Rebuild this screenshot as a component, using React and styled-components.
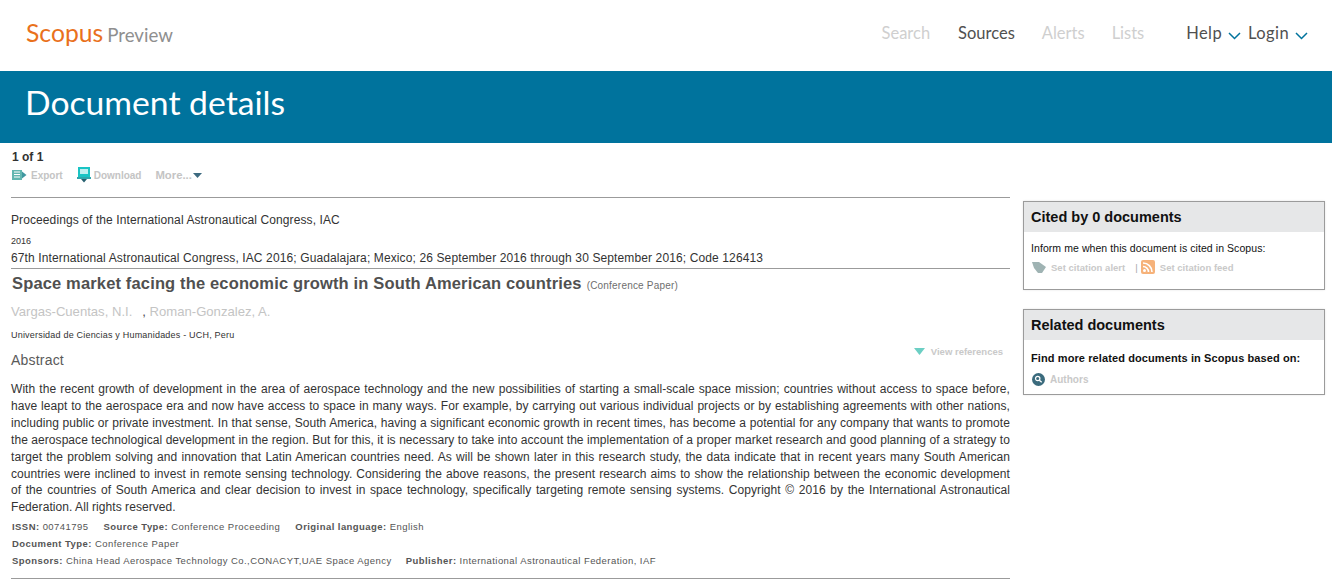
import React from "react";
import styled, { createGlobalStyle } from "styled-components";

const GlobalStyle = createGlobalStyle`
  html, body {
    margin: 0;
    padding: 0;
    background: #ffffff;
    font-family: "Liberation Sans", Arial, sans-serif;
    color: #323232;
  }
`;

const Page = styled.div`
  width: 1332px;
  height: 588px;
  overflow: hidden;
`;

const Header = styled.header`
  height: 71px;
  display: flex;
  align-items: center;
  justify-content: space-between;
  padding: 0 24px 5px 26px;
  box-sizing: border-box;
  font-family: Lato, sans-serif;
`;

const Logo = styled.div`
  display: flex;
  align-items: baseline;
  gap: 4px;
  margin-top: -2px;
`;

const LogoMain = styled.span`
  font-size: 24.7px;
  color: #e9711c;
`;

const LogoSub = styled.span`
  font-size: 18.7px;
  color: #8f8f8f;
`;

const Nav = styled.nav`
  display: flex;
  align-items: center;
`;

const NavItem = styled.a`
  font-size: 16.5px;
  letter-spacing: ${(p) => (p.$menu ? "0.4px" : "0")};
  color: ${(p) => (p.$muted ? "#cfcfcf" : "#505050")};
  margin-left: ${(p) => p.$gap}px;
  display: flex;
  align-items: center;
  gap: 6px;

  svg {
    margin-top: 5px;
  }
`;

const Banner = styled.div`
  height: 72px;
  box-sizing: border-box;
  background: #00739d;
  color: #ffffff;
  display: flex;
  align-items: center;
  padding: 0 0 10px 25px;
  font-family: Lato, sans-serif;
  font-size: 33.7px;
`;

const Content = styled.div`
  display: flex;
  align-items: flex-start;
  padding-left: 11px;
  gap: 13px;
`;

const Main = styled.main`
  width: 999px;
  flex: none;
`;

const Side = styled.aside`
  width: 302px;
  flex: none;
  padding-top: 58px;
  display: flex;
  flex-direction: column;
  gap: 19px;
`;

const Counter = styled.div`
  font-size: 12px;
  font-weight: bold;
  line-height: 14px;
  padding: 7px 0 0 1px;
`;

const Tools = styled.div`
  display: flex;
  align-items: center;
  height: 20px;
  padding: 1px 0 0 1px;
`;

const ToolLink = styled.a`
  display: flex;
  align-items: center;
  gap: ${(p) => p.$iconGap}px;
  font-size: ${(p) => (p.$more ? 11.3 : 10)}px;
  font-weight: bold;
  color: #c4c4c4;
  margin-right: ${(p) => p.$gap || 0}px;
`;

const Rule = styled.hr`
  margin: 0;
  border: 0;
  height: 1px;
  background: #9b9b9b;
`;

const TopRule = styled(Rule)`
  margin-top: 12px;
`;

const SourceName = styled.div`
  font-size: 12px;
  line-height: 14px;
  letter-spacing: 0.1px;
  margin-top: 15px;
`;

const Year = styled.div`
  font-size: 9px;
  line-height: 11px;
  margin-top: 9px;
`;

const Conference = styled.div`
  font-size: 12px;
  line-height: 14px;
  letter-spacing: 0.12px;
  margin-top: 4px;
  height: 17px;
`;

const TitleRow = styled.div`
  display: flex;
  align-items: baseline;
  gap: 5px;
  padding: 4px 0 0 1px;
  height: 25px;
  box-sizing: border-box;
`;

const Title = styled.h1`
  margin: 0;
  font-size: 16.5px;
  line-height: 20px;
  letter-spacing: 0.15px;
  font-weight: bold;
  color: #505050;
`;

const TitleKind = styled.span`
  font-size: 10px;
  letter-spacing: 0.2px;
  color: #6e6e6e;
`;

const Authors = styled.div`
  font-size: 13.1px;
  line-height: 16px;
  margin-top: 10px;
  color: #c4c4c4;
`;

const Comma = styled.span`
  color: #505050;
  margin-left: 10px;
`;

const Affiliation = styled.div`
  font-size: 9px;
  line-height: 11px;
  letter-spacing: 0.2px;
  margin-top: 10px;
`;

const AbstractHead = styled.div`
  display: flex;
  justify-content: space-between;
  height: 22px;
  margin-top: 5px;
`;

const AbstractTitle = styled.h2`
  margin: 6px 0 0;
  font-size: 14px;
  line-height: 16px;
  letter-spacing: 0.2px;
  font-weight: normal;
  color: #5a5a5a;
`;

const ViewRefs = styled.a`
  display: flex;
  align-items: center;
  align-self: flex-start;
  gap: 6px;
  font-size: 9.5px;
  font-weight: bold;
  color: #c9c9c9;
  padding-right: 7px;
`;

const AbstractText = styled.p`
  margin: 13px 0 2px;
  font-size: 12px;
  line-height: 16.9px;
  letter-spacing: 0.06px;
  text-align: justify;
  color: #333333;
`;

const MetaRow = styled.div`
  display: flex;
  font-size: 9.5px;
  line-height: 17px;
  letter-spacing: 0.44px;
  color: #555555;
  padding-left: 1px;
  height: 17px;
`;

const MetaItem = styled.span`
  margin-right: ${(p) => p.$gap || 0}px;
`;

const BottomRule = styled(Rule)`
  margin-top: 9px;
`;

const Panel = styled.section`
  border: 1px solid #9b9b9b;
  box-shadow: 0 0 2px #e4e4e4;
  height: ${(p) => p.$height}px;
  box-sizing: border-box;
`;

const PanelHead = styled.h3`
  margin: 0;
  height: ${(p) => p.$height}px;
  background: #e6e7e8;
  padding-left: 7px;
  font-size: 14.5px;
  line-height: ${(p) => p.$height}px;
  font-weight: bold;
  color: #111111;
`;

const PanelLine = styled.div`
  font-size: ${(p) => (p.$bold ? 11 : 10.5)}px;
  font-weight: ${(p) => (p.$bold ? "bold" : "normal")};
  letter-spacing: ${(p) => (p.$bold ? "0.1px" : "0.07px")};
  line-height: 14px;
  color: #111111;
  padding: ${(p) => p.$top}px 0 0 7px;
`;

const PanelLinks = styled.div`
  display: flex;
  align-items: center;
  font-size: ${(p) => p.$size || 9.5}px;
  font-weight: bold;
  letter-spacing: 0.02px;
  color: #c9c9c9;
  padding: ${(p) => p.$top}px 0 0 8px;
  height: 14px;
`;

const PanelLink = styled.span`
  margin-left: 5px;
`;

const Divider = styled.span`
  font-weight: normal;
  color: #a8a8a8;
  margin: 0 3px 0 10px;
`;

const ExportIcon = () => (
  <svg width="15" height="12" viewBox="0 0 15 12">
    <rect x="0" y="1" width="10" height="10" fill="#62b6b0" />
    <path d="M2 3h6M2 5.5h6M2 8h6" stroke="#ffffff" strokeWidth="1" />
    <path d="M10 2.5l4.5 3.5L10 9.5z" fill="#3f97a0" />
  </svg>
);

const DownloadIcon = () => (
  <svg width="14" height="16" viewBox="0 0 14 16">
    <rect x="1" y="0" width="12" height="10" fill="#19c4c4" />
    <rect x="3" y="2" width="8" height="5" fill="#bfeff0" />
    <rect x="0" y="10" width="14" height="2" fill="#2fa6ac" />
    <path d="M4 12h6l-3 3.5z" fill="#27606f" />
  </svg>
);

const Caret = () => (
  <svg width="9" height="5" viewBox="0 0 9 5">
    <path d="M0 0h9L4.5 5z" fill="#3d6a80" />
  </svg>
);

const Chevron = () => (
  <svg width="13" height="8" viewBox="0 0 13 8">
    <path d="M1 1l5.5 5.5L12 1" fill="none" stroke="#00739d" strokeWidth="1.5" />
  </svg>
);

const RefTriangle = () => (
  <svg width="11" height="7" viewBox="0 0 11 7">
    <path d="M0 0h11L5.5 7z" fill="#6ccfc4" />
  </svg>
);

const BellIcon = () => (
  <svg width="14" height="12" viewBox="0 0 14 12">
    <path d="M0 1h7l7 5-4 6H6L2 7z" fill="#9fb3b3" />
  </svg>
);

const RssIcon = () => (
  <svg width="14" height="14" viewBox="0 0 14 14">
    <rect width="14" height="14" rx="2" fill="#f6b27a" />
    <circle cx="3.5" cy="10.5" r="1.5" fill="#ffffff" />
    <path d="M2 6.5a5.5 5.5 0 0 1 5.5 5.5M2 3a9 9 0 0 1 9 9" fill="none" stroke="#ffffff" strokeWidth="1.6" />
  </svg>
);

const SearchIcon = () => (
  <svg width="13" height="13" viewBox="0 0 13 13">
    <circle cx="6.5" cy="6.5" r="6.5" fill="#3b6b7d" />
    <circle cx="5.7" cy="5.5" r="2.2" fill="none" stroke="#ffffff" strokeWidth="1.2" />
    <path d="M7.3 7.2l2.4 2" stroke="#ffffff" strokeWidth="1.4" />
  </svg>
);

const ABSTRACT =
  "With the recent growth of development in the area of aerospace technology and the new possibilities of starting a small-scale space mission; countries without access to space before, have leapt to the aerospace era and now have access to space in many ways. For example, by carrying out various individual projects or by establishing agreements with other nations, including public or private investment. In that sense, South America, having a significant economic growth in recent times, has become a potential for any company that wants to promote the aerospace technological development in the region. But for this, it is necessary to take into account the implementation of a proper market research and good planning of a strategy to target the problem solving and innovation that Latin American countries need. As will be shown later in this research study, the data indicate that in recent years many South American countries were inclined to invest in remote sensing technology. Considering the above reasons, the present research aims to show the relationship between the economic development of\u00a0the countries of South America and clear decision to invest in space technology, specifically targeting remote sensing systems. Copyright © 2016 by the International Astronautical Federation. All rights reserved.";

export default function App() {
  return (
    <Page>
      <GlobalStyle />
      <Header>
        <Logo>
          <LogoMain>Scopus</LogoMain>
          <LogoSub>Preview</LogoSub>
        </Logo>
        <Nav>
          <NavItem $muted>Search</NavItem>
          <NavItem $gap={28}>Sources</NavItem>
          <NavItem $muted $gap={27}>Alerts</NavItem>
          <NavItem $muted $gap={27}>Lists</NavItem>
          <NavItem $menu $gap={42}>Help <Chevron /></NavItem>
          <NavItem $menu $gap={7}>Login <Chevron /></NavItem>
        </Nav>
      </Header>
      <Banner>Document details</Banner>
      <Content>
        <Main>
          <Counter>1 of 1</Counter>
          <Tools>
            <ToolLink $gap={14} $iconGap={4}><ExportIcon />Export</ToolLink>
            <ToolLink $gap={14} $iconGap={3}><DownloadIcon />Download</ToolLink>
            <ToolLink $more $iconGap={1}>More...<Caret /></ToolLink>
          </Tools>
          <TopRule />
          <SourceName>Proceedings of the International Astronautical Congress, IAC</SourceName>
          <Year>2016</Year>
          <Conference>67th International Astronautical Congress, IAC 2016; Guadalajara; Mexico; 26 September 2016 through 30 September 2016; Code 126413</Conference>
          <Rule />
          <TitleRow>
            <Title>Space market facing the economic growth in South American countries</Title>
            <TitleKind>(Conference Paper)</TitleKind>
          </TitleRow>
          <Authors>Vargas-Cuentas, N.I.<Comma>, </Comma>Roman-Gonzalez, A.</Authors>
          <Affiliation>Universidad de Ciencias y Humanidades - UCH, Peru</Affiliation>
          <AbstractHead>
            <AbstractTitle>Abstract</AbstractTitle>
            <ViewRefs><RefTriangle />View references</ViewRefs>
          </AbstractHead>
          <AbstractText>{ABSTRACT}</AbstractText>
          <MetaRow>
            <MetaItem $gap={15}><b>ISSN:</b> 00741795</MetaItem>
            <MetaItem $gap={15}><b>Source Type:</b> Conference Proceeding</MetaItem>
            <MetaItem><b>Original language:</b> English</MetaItem>
          </MetaRow>
          <MetaRow>
            <MetaItem><b>Document Type:</b> Conference Paper</MetaItem>
          </MetaRow>
          <MetaRow>
            <MetaItem $gap={14}><b>Sponsors:</b> China Head Aerospace Technology Co.,CONACYT,UAE Space Agency</MetaItem>
            <MetaItem><b>Publisher:</b> International Astronautical Federation, IAF</MetaItem>
          </MetaRow>
          <BottomRule />
        </Main>
        <Side>
          <Panel $height={89}>
            <PanelHead $height={30}>Cited by 0 documents</PanelHead>
            <PanelLine $top={9}>Inform me when this document is cited in Scopus:</PanelLine>
            <PanelLinks $top={5}>
              <BellIcon />
              <PanelLink>Set citation alert</PanelLink>
              <Divider>|</Divider>
              <RssIcon />
              <PanelLink>Set citation feed</PanelLink>
            </PanelLinks>
          </Panel>
          <Panel $height={86}>
            <PanelHead $height={30}>Related documents</PanelHead>
            <PanelLine $bold $top={11}>Find more related documents in Scopus based on:</PanelLine>
            <PanelLinks $top={7} $size={10}>
              <SearchIcon />
              <PanelLink>Authors</PanelLink>
            </PanelLinks>
          </Panel>
        </Side>
      </Content>
    </Page>
  );
}
